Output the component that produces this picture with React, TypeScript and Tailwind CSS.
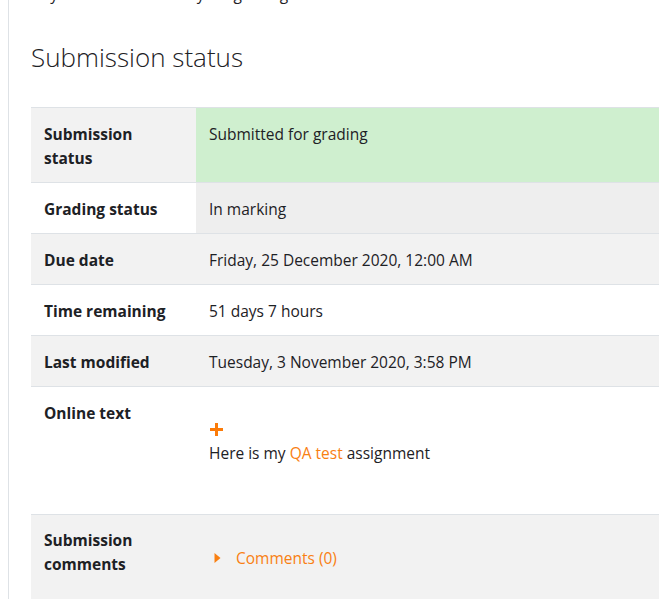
import React from "react"

type Row = {
  label: React.ReactNode
  value: React.ReactNode
  rowBg: string
  valueBg?: string
}

const rows: Row[] = [
  {
    label: (
      <>
        Submission
        <br />
        status
      </>
    ),
    value: "Submitted for grading",
    rowBg: "bg-[#f2f2f2]",
    valueBg: "bg-[#cfefcf]",
  },
  { label: "Grading status", value: "In marking", rowBg: "bg-white", valueBg: "bg-[#eeeeee]" },
  { label: "Due date", value: "Friday, 25 December 2020, 12:00 AM", rowBg: "bg-[#f2f2f2]" },
  { label: "Time remaining", value: "51 days 7 hours", rowBg: "bg-white" },
  { label: "Last modified", value: "Tuesday, 3 November 2020, 3:58 PM", rowBg: "bg-[#f2f2f2]" },
]

function PlusIcon() {
  return (
    <svg width="13" height="13" viewBox="0 0 13 13" aria-hidden="true">
      <rect x="5" y="0" width="3" height="13" fill="#fb7b09" />
      <rect x="0" y="5" width="13" height="3" fill="#fb7b09" />
    </svg>
  )
}

function CaretRight() {
  return (
    <svg width="7" height="10" viewBox="0 0 7 10" aria-hidden="true">
      <path d="M0.5 0 L6.5 5 L0.5 10 Z" fill="#f98012" />
    </svg>
  )
}

export default function App() {
  return (
    <div
      className="h-[599px] w-[659px] overflow-hidden bg-white text-[#1d2125]"
      style={{ fontFamily: '"Open Sans", "Noto Sans", sans-serif' }}
    >
      <div className="ml-[8px] flex h-full flex-col border-l border-[#dee2e6] pl-[22px]">
        {/* previous line, cut off at the top */}
        <div className="-mt-[18px] h-[24px] shrink-0 whitespace-nowrap text-[15.5px] leading-[24px]">
          Any submission is ready for grading
        </div>

        <h2 className="mt-[33px] mb-[32px] text-[26px] font-light leading-[36px]">Submission status</h2>

        <table className="w-[700px] shrink-0 border-collapse text-[15.5px] leading-[24px]">
          <tbody>
            {rows.map((r, i) => (
              <tr key={i} className={`${r.rowBg} border-t border-[#dee2e6]`}>
                <th className="w-[165px] px-[13px] pt-[14px] pb-[12px] text-left align-top font-bold">
                  {r.label}
                </th>
                <td className={`${r.valueBg ?? ""} px-[13px] pt-[14px] pb-[12px] align-top`}>{r.value}</td>
              </tr>
            ))}

            <tr className="border-t border-[#dee2e6] bg-white">
              <th className="w-[165px] px-[13px] pt-[14px] pb-[12px] text-left align-top font-bold">Online text</th>
              <td className="px-[13px] pt-[14px] pb-[12px] align-top">
                <div className="mt-[16px] flex h-[24px] items-center pl-[1px]">
                  <PlusIcon />
                </div>
                <p className="mb-[37px]">
                  Here is my <span className="text-[#f98012]">QA test</span> assignment
                </p>
              </td>
            </tr>

            <tr className="border-t border-[#dee2e6] bg-[#f2f2f2]">
              <th className="w-[165px] px-[13px] pt-[13px] pb-[40px] text-left align-top font-bold">
                Submission
                <br />
                comments
              </th>
              <td className="px-[13px] pt-[13px] align-top">
                <div className="mt-[18px] flex items-center gap-[15px] pl-[5px] text-[#f98012]">
                  <CaretRight />
                  <span>Comments (0)</span>
                </div>
              </td>
            </tr>
          </tbody>
        </table>
      </div>
    </div>
  )
}
